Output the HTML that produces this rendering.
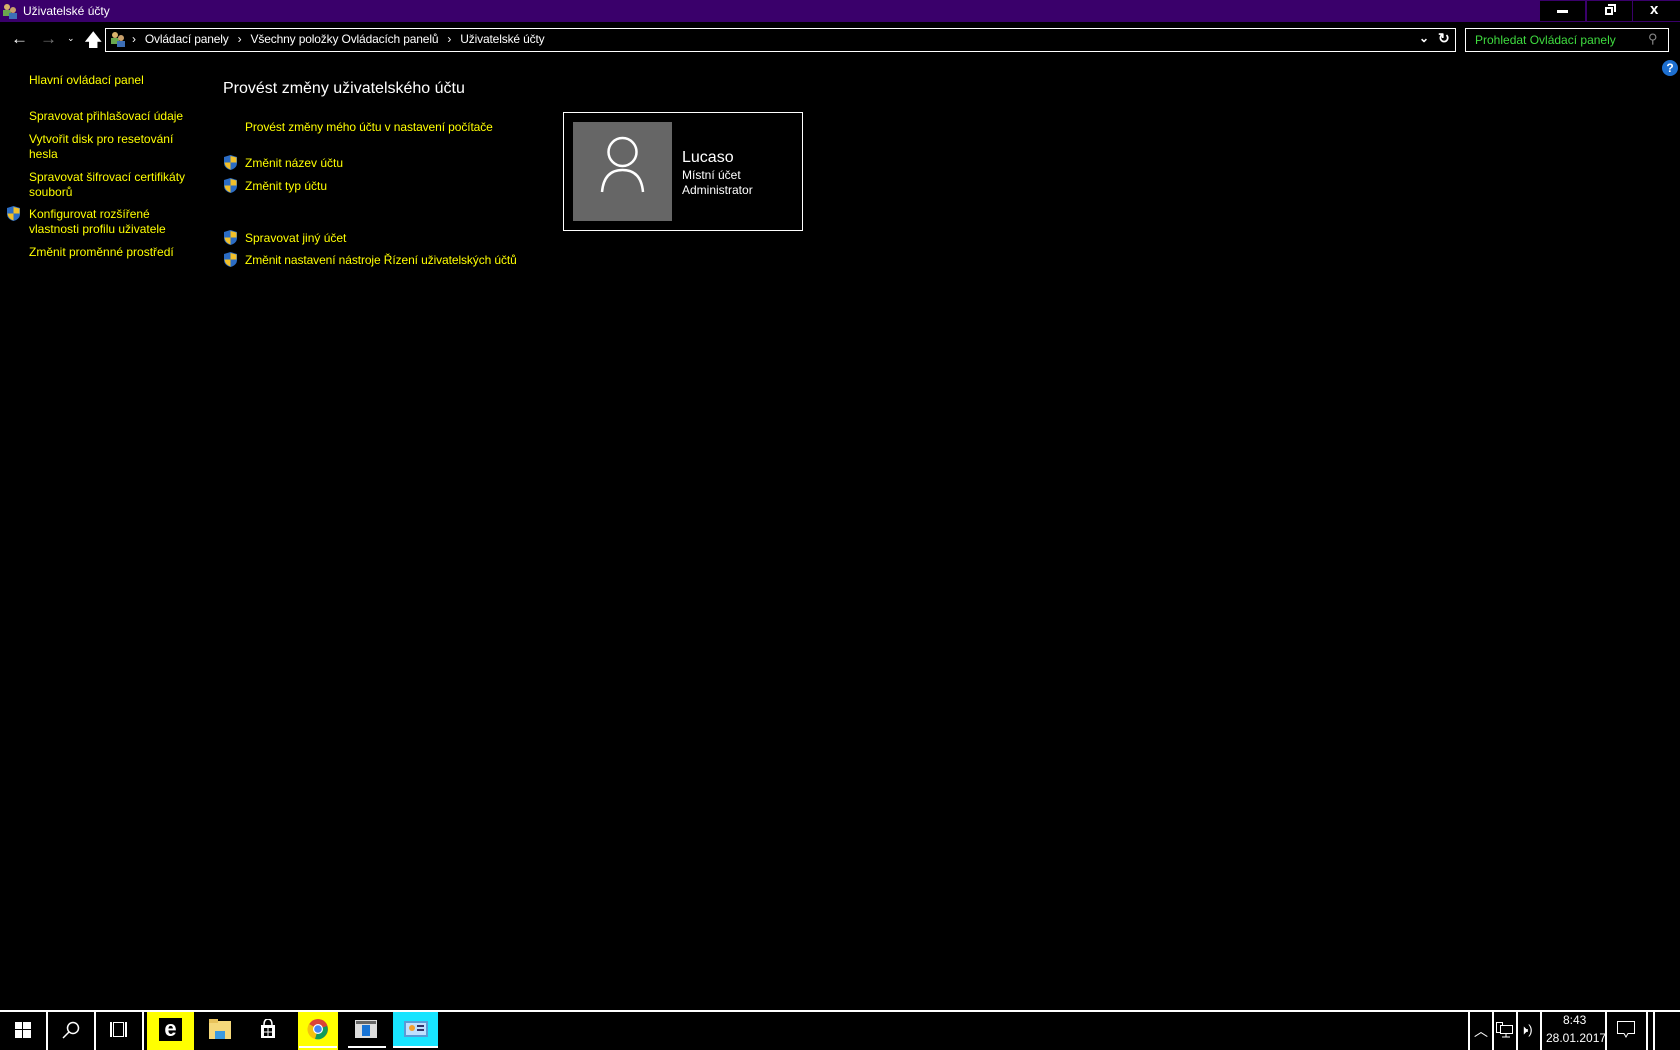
<!DOCTYPE html>
<html><head><meta charset="utf-8"><style>
*{margin:0;padding:0;box-sizing:border-box}
body{width:1680px;height:1050px;background:#000;position:relative;overflow:hidden;font-family:"Liberation Sans",sans-serif;font-size:12px;color:#ff0}
.a{position:absolute;white-space:nowrap}
.y{color:#ffff00}
.w{color:#fff}
.sh{position:absolute;width:13px;height:15px}
.tb{position:absolute;top:1012px;height:38px}
.sep{position:absolute;top:1011px;width:2px;height:39px;background:#fff}
.bc span{display:inline-block;margin:0 9px}
</style></head><body>
<!-- title bar -->
<div class="a" style="left:0;top:0;width:1680px;height:22px;background:#3a006b"></div>
<svg class="a" style="left:2px;top:3px" width="16" height="16"><circle cx="5" cy="4" r="3" fill="#d9b36b"/><rect x="1" y="7" width="8" height="6" fill="#6aa84f"/><circle cx="11" cy="7" r="3" fill="#c9a06b"/><rect x="7" y="10" width="8" height="6" fill="#3d6fb6"/></svg>
<div class="a w" style="left:23px;top:4px;font-size:12px">Uživatelské účty</div>
<div class="a" style="left:1540px;top:1px;width:45px;height:20px;background:#000"></div>
<div class="a" style="left:1557px;top:10px;width:11px;height:3px;background:#fff"></div>
<div class="a" style="left:1587px;top:1px;width:45px;height:20px;background:#000"></div>
<div class="a" style="left:1605px;top:7px;width:8px;height:8px;border:2px solid #fff"></div>
<div class="a" style="left:1608px;top:4px;width:8px;height:8px;border-top:2px solid #fff;border-right:2px solid #fff"></div>
<div class="a" style="left:1633px;top:1px;width:47px;height:20px;background:#000"></div>
<div class="a w" style="left:1650px;top:1px;font-size:15px;font-weight:bold">x</div>
<!-- nav -->
<div class="a w" style="left:11px;top:29px;font-size:17px;font-weight:bold">←</div>
<div class="a" style="left:40px;top:29px;font-size:17px;font-weight:bold;color:#777">→</div>
<div class="a w" style="left:67px;top:33px;font-size:9px">⌄</div>
<div class="a w" style="left:84px;top:28px;font-size:18px">🡅</div>
<div class="a" style="left:105px;top:28px;width:1351px;height:24px;border:1px solid #fff"></div>
<svg class="a" style="left:110px;top:31px" width="16" height="16"><circle cx="5" cy="4" r="3" fill="#d9b36b"/><rect x="1" y="7" width="8" height="6" fill="#6aa84f"/><circle cx="11" cy="7" r="3" fill="#c9a06b"/><rect x="7" y="10" width="8" height="6" fill="#3d6fb6"/></svg>
<div class="a w bc" style="left:123px;top:32px;font-size:12px;letter-spacing:-0.15px"><span>›</span>Ovládací panely<span>›</span>Všechny položky Ovládacích panelů<span>›</span>Uživatelské účty</div>
<div class="a w" style="left:1419px;top:31px;font-size:12px;font-weight:bold">⌄</div>
<div class="a w" style="left:1438px;top:30px;font-size:14px;font-weight:bold">↻</div>
<div class="a" style="left:1465px;top:28px;width:204px;height:24px;border:1px solid #fff"></div>
<div class="a" style="left:1475px;top:33px;font-size:12px;color:#3fdc3f">Prohledat Ovládací panely</div>
<div class="a" style="left:1648px;top:31px;font-size:13px;color:#888">⚲</div>
<div class="a" style="left:1662px;top:60px;width:16px;height:16px;border-radius:50%;background:#1d6fd0;color:#fff;font-weight:bold;font-size:12px;text-align:center;line-height:16px">?</div>
<!-- left -->
<div class="a y" style="left:29px;top:73px">Hlavní ovládací panel</div>
<div class="a y" style="left:29px;top:109px">Spravovat přihlašovací údaje</div>
<div class="a y" style="left:29px;top:132px;line-height:15px">Vytvořit disk pro resetování<br>hesla</div>
<div class="a y" style="left:29px;top:170px;line-height:15px">Spravovat šifrovací certifikáty<br>souborů</div>
<div class="a y" style="left:29px;top:207px;line-height:15px">Konfigurovat rozšířené<br>vlastnosti profilu uživatele</div>
<div class="a y" style="left:29px;top:245px">Změnit proměnné prostředí</div>
<!-- main -->
<div class="a w" style="left:223px;top:80px;font-size:16px">Provést změny uživatelského účtu</div>
<div class="a y" style="left:245px;top:120px;letter-spacing:-0.1px">Provést změny mého účtu v nastavení počítače</div>
<div class="a y" style="left:245px;top:156px">Změnit název účtu</div>
<div class="a y" style="left:245px;top:179px">Změnit typ účtu</div>
<div class="a y" style="left:245px;top:231px">Spravovat jiný účet</div>
<div class="a y" style="left:245px;top:253px;letter-spacing:-0.1px">Změnit nastavení nástroje Řízení uživatelských účtů</div>
<svg width="0" height="0" style="position:absolute"><defs><g id="s"><path d="M6.5 0 L13 2 V8 Q13 13 6.5 15 Q0 13 0 8 V2 Z" fill="#2b6cc4"/><path d="M6.5 1 V7.5 H12.5 V2.5 Z" fill="#f2c029"/><path d="M6.5 7.5 H0.5 Q1 12.5 6.5 14.5 Z" fill="#f2c029"/></g></defs></svg>
<svg class="sh" style="left:7px;top:206px"><use href="#s"/></svg>
<svg class="sh" style="left:224px;top:155px"><use href="#s"/></svg>
<svg class="sh" style="left:224px;top:178px"><use href="#s"/></svg>
<svg class="sh" style="left:224px;top:230px"><use href="#s"/></svg>
<svg class="sh" style="left:224px;top:252px"><use href="#s"/></svg>
<!-- card -->
<div class="a" style="left:563px;top:112px;width:240px;height:119px;border:1px solid #fff"></div>
<div class="a" style="left:573px;top:122px;width:99px;height:99px;background:#666"></div>
<svg class="a" style="left:573px;top:122px" width="99" height="99"><circle cx="49.5" cy="30" r="14" fill="none" stroke="#fff" stroke-width="2.5"/><path d="M29 70 Q31 48 49.5 48 Q68 48 70 70" fill="none" stroke="#fff" stroke-width="2.5"/></svg>
<div class="a w" style="left:682px;top:149px;font-size:16px">Lucaso</div>
<div class="a w" style="left:682px;top:168px">Místní účet</div>
<div class="a w" style="left:682px;top:183px">Administrator</div>
<!-- taskbar -->
<div class="a" style="left:0;top:1010px;width:1680px;height:2px;background:#fff"></div>
<div class="sep" style="left:46px"></div><div class="sep" style="left:94px"></div><div class="sep" style="left:142px"></div>
<svg class="a" style="left:15px;top:1022px" width="16" height="16"><rect x="0" y="0" width="7" height="7" fill="#fff"/><rect x="8" y="0" width="8" height="7" fill="#fff"/><rect x="0" y="8" width="7" height="8" fill="#fff"/><rect x="8" y="8" width="8" height="8" fill="#fff"/></svg>
<svg class="a" style="left:62px;top:1021px" width="18" height="18"><circle cx="11" cy="7" r="5.5" fill="none" stroke="#fff" stroke-width="1.5"/><path d="M7 11 L1 17" stroke="#fff" stroke-width="1.5"/></svg>
<div class="a" style="left:110px;top:1022px;width:17px;height:15px;border:2px solid #fff;border-width:0 2px"></div>
<div class="a" style="left:113px;top:1022px;width:11px;height:15px;border:1.5px solid #fff"></div>
<div class="tb" style="left:147px;width:47px;background:#ffff00"></div>
<div class="a" style="left:159px;top:1018px;width:23px;height:23px;background:#000;color:#fff;font-weight:bold;font-size:22px;line-height:21px;text-align:center">e</div>
<svg class="a" style="left:209px;top:1019px" width="22" height="20"><rect x="0" y="2" width="22" height="18" fill="#f5d87a"/><rect x="0" y="0" width="9" height="4" fill="#e8c25b"/><rect x="6" y="12" width="10" height="8" fill="#3a9ae0"/></svg>
<svg class="a" style="left:260px;top:1019px" width="16" height="20"><path d="M4 6 Q4 0 8 0 Q12 0 12 6" fill="none" stroke="#fff" stroke-width="1.5"/><rect x="1" y="6" width="14" height="13" fill="#fff"/><rect x="4" y="9" width="3.5" height="3.5" fill="#000"/><rect x="8.5" y="9" width="3.5" height="3.5" fill="#000"/><rect x="4" y="13.5" width="3.5" height="3.5" fill="#000"/><rect x="8.5" y="13.5" width="3.5" height="3.5" fill="#000"/></svg>
<div class="tb" style="left:298px;width:40px;background:#ffff00"></div>
<svg class="a" style="left:307px;top:1018px" width="22" height="22"><circle cx="11" cy="11" r="10" fill="#db4437"/><path d="M11 11 L20 8 A10 10 0 0 1 8 21 Z" fill="#0f9d58"/><path d="M11 11 L8 21 A10 10 0 0 1 2 6 Z" fill="#f4c20d"/><circle cx="11" cy="11" r="5" fill="#fff"/><circle cx="11" cy="11" r="3.8" fill="#4285f4"/></svg>
<div class="a" style="left:299px;top:1046px;width:38px;height:2px;background:#fff"></div>
<svg class="a" style="left:355px;top:1020px" width="22" height="18"><rect width="22" height="18" fill="#ddd"/><rect x="1" y="1" width="20" height="3" fill="#666"/><rect x="7" y="5" width="8" height="11" fill="#1874d6"/></svg>
<div class="a" style="left:348px;top:1046px;width:38px;height:2px;background:#fff"></div>
<div class="tb" style="left:393px;width:45px;height:35px;background:#18e4ff"></div>
<svg class="a" style="left:404px;top:1021px" width="24" height="16"><rect width="24" height="16" fill="#5a9bd6"/><rect x="2" y="2" width="20" height="12" fill="#bfe0ff"/><circle cx="8" cy="7" r="3" fill="#f0a030"/><rect x="13" y="4" width="7" height="2" fill="#336"/><rect x="13" y="8" width="7" height="2" fill="#336"/></svg>
<div class="a" style="left:393px;top:1046px;width:45px;height:2px;background:#fff"></div>
<div class="sep" style="left:1468px"></div><div class="sep" style="left:1492px"></div><div class="sep" style="left:1516px"></div><div class="sep" style="left:1540px"></div><div class="sep" style="left:1605px"></div><div class="sep" style="left:1646px"></div><div class="sep" style="left:1653px"></div>
<div class="a w" style="left:1474px;top:1021px;font-size:14px">︿</div>
<svg class="a" style="left:1496px;top:1022px" width="18" height="16"><rect x="0.5" y="0.5" width="6" height="10" fill="none" stroke="#fff"/><rect x="4.5" y="3.5" width="12" height="8" fill="#000" stroke="#fff"/><path d="M10 12 V15 M6 15 H14" stroke="#fff"/></svg>
<div class="a w" style="left:1520px;top:1022px;font-size:13px">🕨)</div>
<div class="a w" style="left:1563px;top:1013px;font-size:12px">8:43</div>
<div class="a w" style="left:1546px;top:1031px;font-size:12px">28.01.2017</div>
<svg class="a" style="left:1617px;top:1021px" width="18" height="17"><path d="M0.5 0.5 H17.5 V12.5 H11 L9 16 L7 12.5 H0.5 Z" fill="none" stroke="#fff"/></svg>
</body></html>
